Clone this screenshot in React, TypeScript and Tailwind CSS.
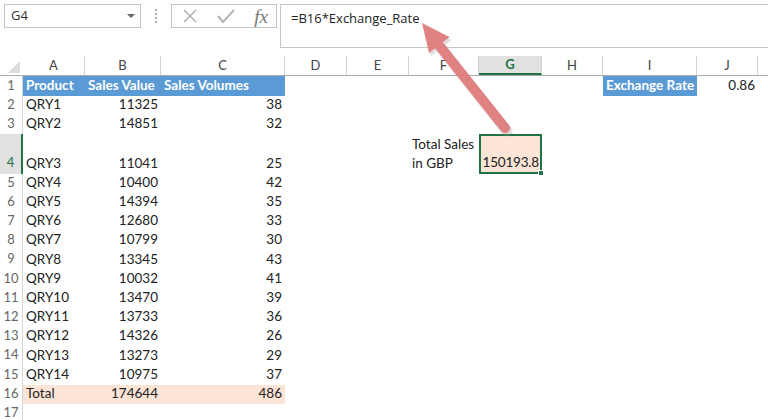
import React from "react";

// column widths of the sheet (row header first)
const cols = [
  { name: "", w: 23 },
  { name: "A", w: 62 },
  { name: "B", w: 76 },
  { name: "C", w: 124 },
  { name: "D", w: 62 },
  { name: "E", w: 62 },
  { name: "F", w: 70 },
  { name: "G", w: 63 },
  { name: "H", w: 61 },
  { name: "I", w: 94 },
  { name: "J", w: 61 },
  { name: " ", w: 40 },
];

type Cell = { v: string; right?: boolean; kind?: "head" | "total" };

const products: [string, number, number][] = [
  ["QRY1", 11325, 38],
  ["QRY2", 14851, 32],
  ["QRY3", 11041, 25],
  ["QRY4", 10400, 42],
  ["QRY5", 14394, 35],
  ["QRY6", 12680, 33],
  ["QRY7", 10799, 30],
  ["QRY8", 13345, 43],
  ["QRY9", 10032, 41],
  ["QRY10", 13470, 39],
  ["QRY11", 13733, 36],
  ["QRY12", 14326, 26],
  ["QRY13", 13273, 29],
  ["QRY14", 10975, 37],
];

const cellClass = (c?: Cell) => {
  if (!c) return "";
  if (c.kind === "head") return "bg-[#5b9bd5] text-white font-bold";
  if (c.kind === "total") return "bg-[#fce4d6] text-[#222]";
  return "text-[#222]";
};

const SheetRow = ({
  num,
  h,
  cells,
  active,
  children,
}: {
  num: number;
  h: string;
  cells: Record<string, Cell>;
  active?: boolean;
  children?: React.ReactNode;
}) => (
  <div className={`flex ${h}`}>
    <div
      className={`w-[23px] shrink-0 flex items-end justify-center pb-[1px] text-[13px] ${
        active
          ? "bg-[#e1e1e1] text-[#217346] border-r-2 border-[#217346]"
          : "text-[#666] border-r border-[#d4d4d4]"
      }`}
    >
      {num}
    </div>
    {cols.slice(1).map((c) => {
      const cell = cells[c.name];
      if (children && c.name === "F") return <React.Fragment key={c.name}>{children}</React.Fragment>;
      if (children && c.name === "G") return null;
      return (
        <div
          key={c.name}
          style={{ width: c.w }}
          className={`shrink-0 flex items-end px-[3px] pb-[1px] whitespace-nowrap ${
            cell?.right ? "justify-end" : ""
          } ${cellClass(cell)}`}
        >
          {cell?.v}
        </div>
      );
    })}
  </div>
);

export default function App() {
  const body = products.map((p) => ({
    A: { v: p[0] },
    B: { v: String(p[1]), right: true },
    C: { v: String(p[2]), right: true },
  }));

  return (
    <div className="relative w-[768px] h-[420px] overflow-hidden bg-white font-['Lato',sans-serif] text-[13.5px]">
      {/* formula bar */}
      <div className="flex items-start h-[56px] pt-[4px] pl-[4px] font-['Open_Sans',sans-serif]">
        <div className="w-[137px] h-[24px] border border-[#c6c6c6] flex items-center justify-between pl-[6px] pr-[5px] text-[13px] text-[#333]">
          <span>G4</span>
          <svg width="8" height="5" viewBox="0 0 8 5">
            <path d="M0 0 L8 0 L4 4 Z" fill="#666" />
          </svg>
        </div>
        <div className="w-[30px] h-[24px] flex flex-col items-center justify-center gap-[2px]">
          <span className="w-[2px] h-[2px] bg-[#aaa]" />
          <span className="w-[2px] h-[2px] bg-[#aaa]" />
          <span className="w-[2px] h-[2px] bg-[#aaa]" />
          <span className="w-[2px] h-[2px] bg-[#aaa]" />
        </div>
        <div className="w-[106px] h-[24px] border border-[#c6c6c6] flex items-center justify-between pl-[10px] pr-[8px]">
          <svg width="16" height="16" viewBox="0 0 16 16">
            <path d="M2 2 L14 14 M14 2 L2 14" stroke="#b3b3b3" strokeWidth="1.6" />
          </svg>
          <svg width="18" height="16" viewBox="0 0 18 16">
            <path d="M1 8 L6 14 L17 2" stroke="#b3b3b3" strokeWidth="2" fill="none" />
          </svg>
          <span className="font-['Liberation_Serif',serif] italic text-[19px] text-[#777] leading-none">
            fx
          </span>
        </div>
        <div className="ml-[3px] flex-1 h-[44px] border border-[#c6c6c6] border-r-0 pl-[10px] pt-[4px] text-[13px] text-[#222]">
          =B16*Exchange_Rate
        </div>
      </div>

      {/* column headers */}
      <div className="flex h-[20px] border-b border-[#ababab] text-[#444] text-[13px]">
        {cols.map((c, i) =>
          i === 0 ? (
            <div key="corner" style={{ width: c.w }} className="shrink-0 flex items-end justify-end pr-[3px] pb-[2px]">
              <svg width="12" height="12" viewBox="0 0 12 12">
                <path d="M12 0 L12 12 L0 12 Z" fill="#dcdcdc" />
              </svg>
            </div>
          ) : c.name === "G" ? (
            <div
              key={c.name}
              style={{ width: c.w }}
              className="shrink-0 flex items-center justify-center bg-[#e1e1e1] text-[#217346] font-bold border-b-2 border-[#217346] border-r border-r-[#d4d4d4]"
            >
              {c.name}
            </div>
          ) : (
            <div
              key={c.name}
              style={{ width: c.w }}
              className="shrink-0 flex items-center justify-center border-r border-[#d4d4d4]"
            >
              {c.name}
            </div>
          )
        )}
      </div>

      {/* sheet */}
      <div className="flex flex-col">
        <SheetRow
          num={1}
          h="h-[20px]"
          cells={{
            A: { v: "Product", kind: "head" },
            B: { v: "Sales Value", kind: "head" },
            C: { v: "Sales Volumes", kind: "head" },
            I: { v: "Exchange Rate", kind: "head" },
            J: { v: "0.86", right: true },
          }}
        />
        {body.slice(0, 2).map((r, i) => (
          <SheetRow key={i} num={i + 2} h="h-[19.2px]" cells={r} />
        ))}
        <SheetRow num={4} h="h-[39.6px]" cells={body[2]} active>
          <div className="w-[70px] shrink-0 flex flex-col justify-end px-[3px] pb-[1px] leading-[19px] text-[#222]">
            <span>Total Sales</span>
            <span>in GBP</span>
          </div>
          <div className="relative w-[63px] shrink-0 bg-[#fce4d6] border-2 border-[#217346] flex items-end justify-end pr-[1px] text-[#222] whitespace-nowrap tracking-[-0.2px]">
            150193.8
            <span className="absolute -right-[4px] -bottom-[4px] w-[6px] h-[6px] bg-[#217346] border border-white" />
          </div>
        </SheetRow>
        {body.slice(3).map((r, i) => (
          <SheetRow key={i} num={i + 5} h="h-[19.2px]" cells={r} />
        ))}
        <SheetRow
          num={16}
          h="h-[19.2px]"
          cells={{
            A: { v: "Total", kind: "total" },
            B: { v: "174644", right: true, kind: "total" },
            C: { v: "486", right: true, kind: "total" },
          }}
        />
        <SheetRow num={17} h="h-[19.2px]" cells={{}} />
      </div>

      {/* annotation arrow */}
      <svg className="absolute left-0 top-0 pointer-events-none" width="768" height="420">
        <g opacity="0.25" transform="translate(2 3)">
          <line x1="439" y1="45" x2="505" y2="128" stroke="#888" strokeWidth="11" strokeLinecap="round" />
          <polygon points="422,23 449.5,37 429,53" fill="#888" />
        </g>
        <g opacity="0.9">
          <line x1="438" y1="44" x2="505" y2="128" stroke="#e07878" strokeWidth="10" strokeLinecap="round" />
          <polygon points="422,23 449.5,37 429,53" fill="#e07878" />
        </g>
      </svg>
    </div>
  );
}
